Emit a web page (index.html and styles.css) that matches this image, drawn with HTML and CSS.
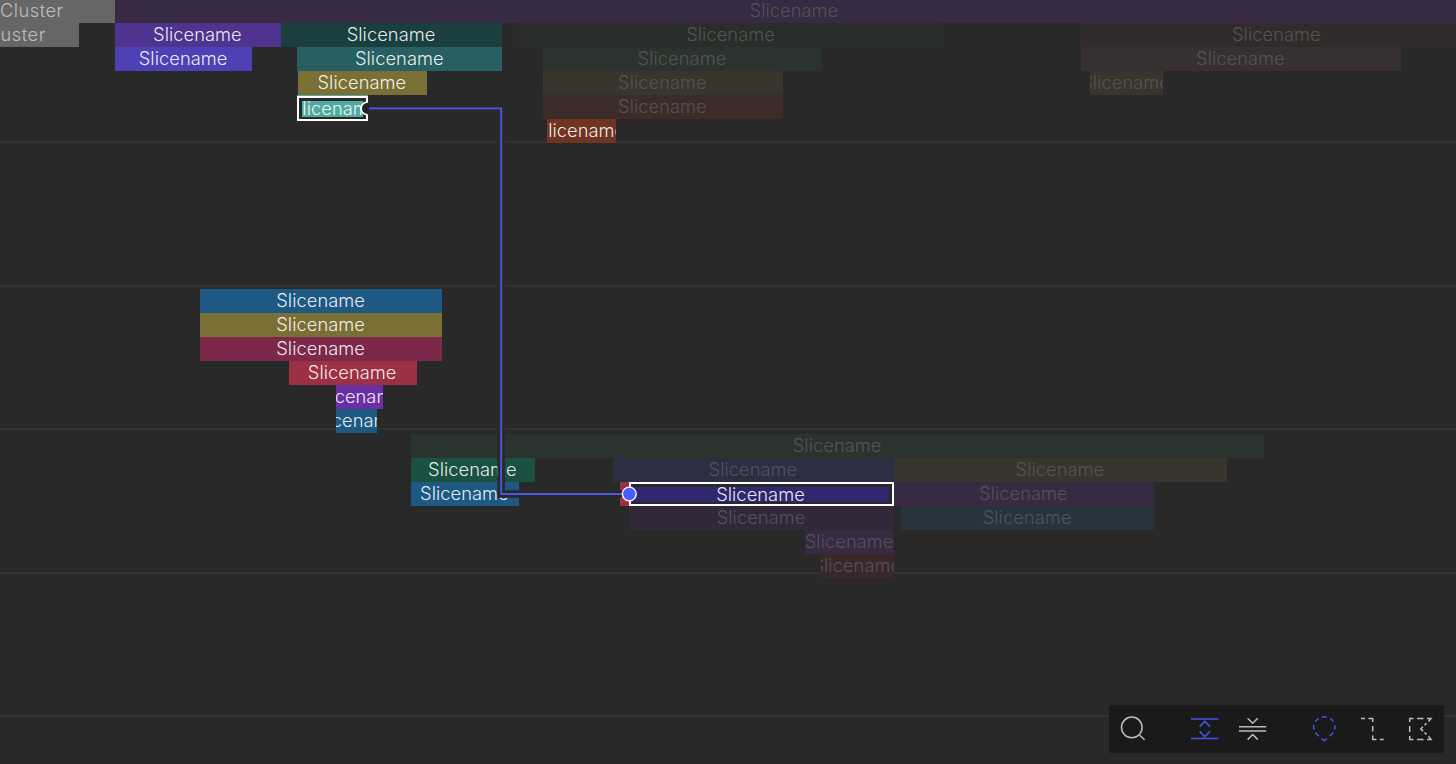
FILE: index.html
```html
<!DOCTYPE html>
<html lang="en">
<head>
<meta charset="utf-8">
<title>Trace timeline</title>
<link rel="stylesheet" href="styles.css">
</head>
<body>
<main class="timeline">
  <section class="track track-first">
    <div class="row">
      <div class="slice cluster" style="margin-left:-51.5px;width:166.5px">Cluster</div>
      <div class="slice plum dim" style="width:1359px">Slicename</div>
    </div>
    <div class="row">
      <div class="slice cluster" style="margin-left:-51.5px;width:130.8px">Cluster</div>
      <div class="slice purple" style="margin-left:35.7px;width:166px">Slicename</div>
      <div class="slice pine" style="width:221.3px">Slicename</div>
      <div class="slice moss dim" style="margin-left:16.5px;width:424.7px">Slicename</div>
      <div class="slice umber dim" style="margin-left:137px;width:393px">Slicename</div>
    </div>
    <div class="row">
      <div class="slice indigo" style="margin-left:115px;width:137.4px">Slicename</div>
      <div class="slice teal" style="margin-left:45.1px;width:204.8px">Slicename</div>
      <div class="slice fern dim" style="margin-left:40.5px;width:279.5px">Slicename</div>
      <div class="slice cocoa dim" style="margin-left:258.8px;width:319.8px">Slicename</div>
    </div>
    <div class="row">
      <div class="slice olive" style="margin-left:297.5px;width:129.9px">Slicename</div>
      <div class="slice khaki dim" style="margin-left:115.4px;width:240.4px">Slicename</div>
      <div class="slice khaki dim" style="margin-left:306.5px;width:73px">Slicename</div>
    </div>
    <div class="row">
      <div class="slice aqua selected selected-source" style="margin-left:297.3px;width:70.6px"><span class="inner">Slicename</span></div>
      <div class="slice rust dim" style="margin-left:174.9px;width:240.4px">Slicename</div>
    </div>
    <div class="row">
      <div class="slice orange" style="margin-left:547px;width:69px">Slicename</div>
    </div>
  </section>

  <section class="track"></section>

  <section class="track track-third">
    <div class="row"><div class="slice blue" style="margin-left:200px;width:242.4px">Slicename</div></div>
    <div class="row"><div class="slice olive" style="margin-left:200px;width:242.4px">Slicename</div></div>
    <div class="row"><div class="slice wine" style="margin-left:200px;width:242.4px">Slicename</div></div>
    <div class="row"><div class="slice red" style="margin-left:288.5px;width:128.5px">Slicename</div></div>
    <div class="row"><div class="slice violet" style="margin-left:336px;width:46.7px">Slicename</div></div>
    <div class="row"><div class="slice blue" style="margin-left:336px;width:41px">Slicename</div></div>
  </section>

  <section class="track track-fourth">
    <div class="row"><div class="slice fern dim" style="margin-left:411px;width:853.4px">Slicename</div></div>
    <div class="row">
      <div class="slice green" style="margin-left:411px;width:124px">Slicename</div>
      <div class="slice navy dim" style="margin-left:78px;width:281px">Slicename</div>
      <div class="slice khaki dim" style="width:333px">Slicename</div>
    </div>
    <div class="row">
      <div class="slice blue" style="margin-left:411px;width:108px">Slicename</div>
      <div class="slice red" style="margin-left:101.3px;width:8.7px"></div>
      <div class="slice royal selected" style="width:265px"><span class="inner">Slicename</span></div>
      <div class="slice plum dim" style="width:260px">Slicename</div>
    </div>
    <div class="row">
      <div class="slice grape dim" style="margin-left:629.3px;width:264.7px">Slicename</div>
      <div class="slice steel dim" style="margin-left:7.3px;width:252.7px">Slicename</div>
    </div>
    <div class="row"><div class="slice plum dim" style="margin-left:805.4px;width:88.6px">Slicename</div></div>
    <div class="row"><div class="slice maroon dim" style="margin-left:820.8px;width:73.2px">Slicename</div></div>
  </section>

  <section class="track"></section>
  <section class="track track-last"></section>

  <svg class="flow" width="1456" height="764" viewBox="0 0 1456 764" fill="none">
    <path class="halo" d="M368 108.3H501.2V494H622"/>
    <path class="link" d="M367.5 108.3H501.2V494H629"/>
    <path class="socket" d="M369 102.4H367A6 6 0 0 0 367 114.4H369Z"/>
    <path class="socket-ring" d="M367.5 102A6.4 6.4 0 0 0 367.5 114.8"/>
    <circle class="endpoint" cx="629.3" cy="494" r="6.9"/>
  </svg>

  <nav class="toolbar">
    <svg class="icon" viewBox="0 0 48 48"><circle cx="22.8" cy="22.4" r="10.3"/><path d="M30.1 29.7L35.6 34.8"/></svg>
    <svg class="icon active gap-wide" viewBox="0 0 48 48"><path d="M10 14H37.4M10 33.4H37.4M18.6 21.6L23.8 16.4L29 21.6M18.6 26.4L23.8 31.6L29 26.4"/></svg>
    <svg class="icon" viewBox="0 0 48 48"><path d="M18.6 13.2L23.7 18.3L28.8 13.2M10 21.8H37.2M10 25.9H37.2M18.6 34.6L23.7 29.5L28.8 34.6"/></svg>
    <svg class="icon active gap-wide" viewBox="0 0 48 48"><path d="M20.7 12.2Q23.3 11.4 25.9 12.2M29.2 13.6Q31.2 14.7 32.4 16.6M33.8 20.2Q34.3 22.5 33.6 24.8M32.2 27.6L28.8 31.2M26 33.5L23.3 35.8L20.6 33.5M17.8 31.2L14.4 27.6M13 24.8Q12.3 22.5 12.8 20.2M14.2 16.6Q15.4 14.7 17.4 13.6"/></svg>
    <svg class="icon" viewBox="0 0 48 48"><path d="M12 13.4H16M19.5 13.4H23.7V17M23.7 21V26.5M23.7 30.5V34.4H27.5M30.7 34.4H34.7"/></svg>
    <svg class="icon" viewBox="0 0 48 48"><path d="M12.7 17V13.4H16.5M20 13.4H26.5M30 13.4H34L31.5 16.5M29.5 18.3L27.5 20.3M12.7 21V27M12.7 31V34.4H16.5M20 34.4H26.5M30 34.4H34L31.5 31.3M26 21.7L23.8 23.9L26 26.1M27.5 27.5L29.5 29.4"/></svg>
  </nav>
</main>
</body>
</html>
```
FILE: styles.css
```css
body {
  margin: 0;
  background: #292929;
}

.timeline {
  position: relative;
  display: grid;
  grid-template-rows: 143px 144px 143px 144px 143px 47px;
  width: 1456px;
  height: 764px;
  overflow: hidden;
  background: #292929;
  font: 350 18.3px/23px Inter, "Liberation Sans", sans-serif;
  letter-spacing: 0.05px;
}

.track {
  box-sizing: border-box;
  min-width: 0;
  min-height: 0;
  border-bottom: 2px solid #333;
}

.track-last { border-bottom: 0; }
.track-first .row:first-child { margin-top: -1px; }
.track-third { padding-top: 2px; }
.track-fourth { padding-top: 4px; }

.row {
  display: flex;
  height: 24px;
}

.slice {
  display: flex;
  flex: none;
  justify-content: center;
  box-sizing: border-box;
  height: 24px;
  padding-right: 1.2px;
  overflow: hidden;
  color: rgba(255, 255, 255, 0.9);
  white-space: nowrap;
}

.slice.dim { color: #535353; }

.cluster { background: #666; letter-spacing: 0.5px; }
.slice.cluster { padding-right: 0; color: #bdbdbd; }
.plum { background: #382a42; }
.purple { background: #4e348f; }
.indigo { background: #4d41b5; }
.pine { background: #1a3f3e; }
.teal { background: #285f62; }
.olive { background: #7a6f34; }
.aqua { background: #51aaa2; }
.orange { background: #6f3522; }
.moss { background: #292e2a; }
.fern { background: #2b332e; }
.khaki { background: #38352c; }
.rust { background: #3b2c2a; }
.umber { background: #312c2b; }
.cocoa { background: #373030; }
.blue { background: #1e5984; }
.wine { background: #7b284b; }
.red { background: #9c3143; }
.violet { background: #6a30a3; }
.green { background: #1a5142; }
.navy { background: #2c2f42; }
.royal { background: #30276f; }
.grape { background: #32283a; }
.steel { background: #27343d; }
.maroon { background: #39272c; }

.slice.selected {
  border: 2px solid #fff;
  padding: 2.5px;
  background-clip: content-box;
}

.selected .inner {
  display: flex;
  flex: 1;
  justify-content: center;
  box-sizing: border-box;
  min-width: 0;
  padding-right: 2px;
  overflow: hidden;
  line-height: 15px;
}

.slice.selected-source {
  height: 25px;
  margin-top: 1px;
  margin-bottom: -2px;
  box-shadow: 0 -1px #51aaa2;
}

.selected-source .inner {
  padding-right: 0;
  padding-left: 5px;
}

.flow {
  position: absolute;
  inset: 0;
}

.halo { stroke: #292929; stroke-width: 7.6; }
.link { stroke: #4a57e8; stroke-width: 1.8; }
.socket { fill: #222; }
.socket-ring { stroke: #fff; stroke-width: 1.7; }
.endpoint { fill: #4b5cff; stroke: #fff; stroke-width: 1.4; }

.toolbar {
  position: absolute;
  right: 12px;
  bottom: 11.5px;
  display: flex;
  box-sizing: border-box;
  width: 335px;
  height: 47.5px;
  border-radius: 3px;
  background: #1a1a1a;
}

.icon {
  flex: none;
  width: 48px;
  height: 48px;
  fill: none;
  stroke: #bcbcbc;
  stroke-width: 1.5;
}

.active { stroke: #4655e8; }
.gap-wide { margin-left: 24px; }
```
